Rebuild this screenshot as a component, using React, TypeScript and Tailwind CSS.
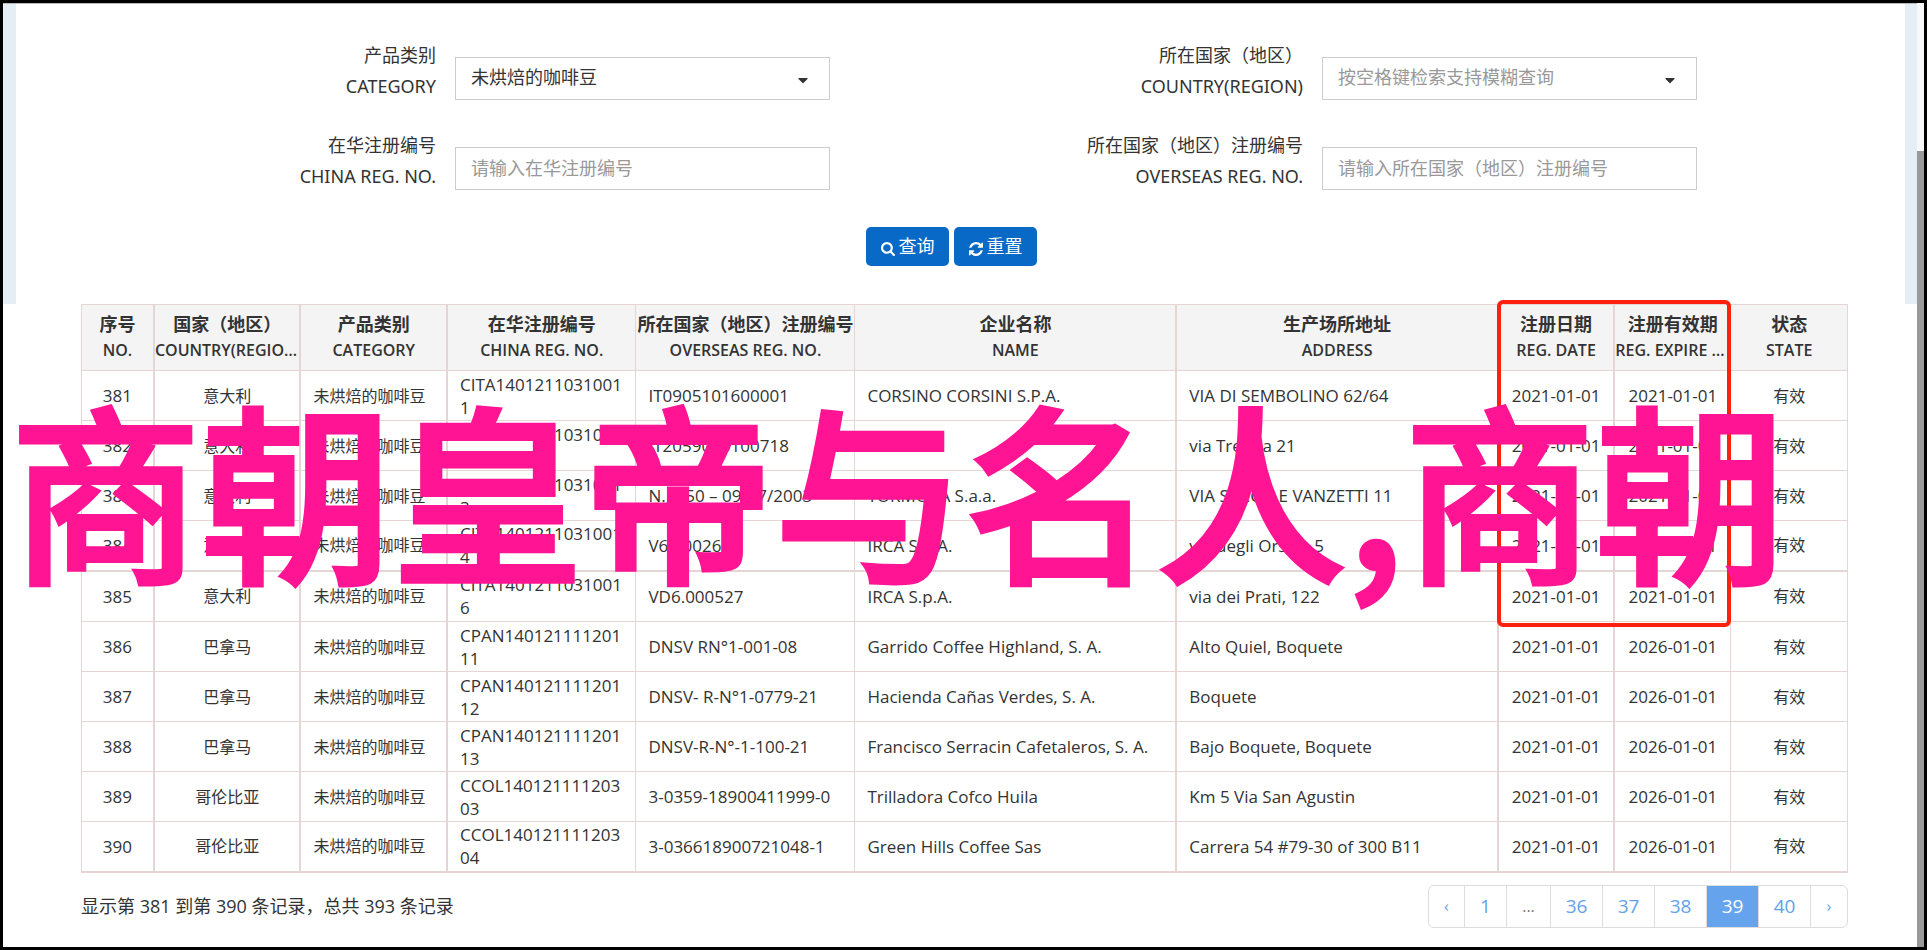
import { FaCaretDown } from 'react-icons/fa';

type Row = [string, string, string, string, string, string, string];

const rows: Row[] = [
  ['381', '意大利', 'CITA14012110310011', 'IT0905101600001', 'CORSINO CORSINI S.P.A.', 'VIA DI SEMBOLINO 62/64', '2021-01-01'],
  ['382', '意大利', 'CITA14012110310012', 'IT2059010100718', 'Kami Srl', 'via Trescia 21', '2021-01-01'],
  ['383', '意大利', 'CITA14012110310013', 'N.1750 – 09/07/2003', 'TORMOKA S.a.a.', 'VIA SACCO E VANZETTI 11', '2021-01-01'],
  ['384', '意大利', 'CITA14012110310014', 'V6.00026', 'IRCA S.p.A.', 'via degli Orsini, 5', '2021-01-01'],
  ['385', '意大利', 'CITA14012110310016', 'VD6.000527', 'IRCA S.p.A.', 'via dei Prati, 122', '2021-01-01'],
  ['386', '巴拿马', 'CPAN14012111120111', 'DNSV RN°1-001-08', 'Garrido Coffee Highland, S. A.', 'Alto Quiel, Boquete', '2026-01-01'],
  ['387', '巴拿马', 'CPAN14012111120112', 'DNSV- R-N°1-0779-21', 'Hacienda Cañas Verdes, S. A.', 'Boquete', '2026-01-01'],
  ['388', '巴拿马', 'CPAN14012111120113', 'DNSV-R-N°-1-100-21', 'Francisco Serracin Cafetaleros, S. A.', 'Bajo Boquete, Boquete', '2026-01-01'],
  ['389', '哥伦比亚', 'CCOL14012111120303', '3-0359-18900411999-0', 'Trilladora Cofco Huila', 'Km 5 Via San Agustin', '2026-01-01'],
  ['390', '哥伦比亚', 'CCOL14012111120304', '3-036618900721048-1', 'Green Hills Coffee Sas', 'Carrera 54 #79-30 of 300 B11', '2026-01-01'],
];

const columns = [
  { zh: '序号', en: 'NO.', style: 'w-[4.1%]' },
  { zh: '国家（地区）', en: 'COUNTRY(REGION)', style: 'w-[8.3%]' },
  { zh: '产品类别', en: 'CATEGORY', style: 'w-[8.3%]' },
  { zh: '在华注册编号', en: 'CHINA REG. NO.', style: 'w-[10.7%]' },
  { zh: '所在国家（地区）注册编号', en: 'OVERSEAS REG. NO.', style: 'w-[12.4%]' },
  { zh: '企业名称', en: 'NAME', style: 'w-[18.2%]' },
  { zh: '生产场所地址', en: 'ADDRESS', style: 'w-[18.2%]' },
  { zh: '注册日期', en: 'REG. DATE', style: 'w-[6.6%]' },
  { zh: '注册有效期', en: 'REG. EXPIRE DATE', style: 'w-[6.6%]' },
  { zh: '状态', en: 'STATE', style: 'w-[6.6%]' },
];

const pages = ['‹', '1', '...', '36', '37', '38', '39', '40', '›'];

function pageStyle(p: string) {
  if (p === '...') return 'w-11 text-[16px] text-[#777]';
  if (p === '1') return 'w-[42px]';
  if (p.length === 1) return 'w-9 text-[16px]';
  return p === '39' ? 'w-[52px] bg-[#65a4ec] text-white' : 'w-[52px]';
}

function SearchIcon() {
  return (
    <svg viewBox="0 0 1664 1664" className="mt-1 size-[14px]" fill="currentColor" aria-hidden="true">
      <path d="M1152 704q0-185-131.5-316.5t-316.5-131.5-316.5 131.5-131.5 316.5 131.5 316.5 316.5 131.5 316.5-131.5 131.5-316.5zm512 832q0 52-38 90t-90 38q-54 0-90-38l-343-342q-179 124-399 124-143 0-273.5-55.5t-225-150-150-225-55.5-273.5 55.5-273.5 150-225 225-150 273.5-55.5 273.5 55.5 225 150 150 225 55.5 273.5q0 220-124 399l343 343q37 37 37 90z" />
    </svg>
  );
}

function RefreshIcon() {
  return (
    <svg viewBox="0 0 1536 1536" className="mt-1 size-[14px]" fill="currentColor" aria-hidden="true">
      <path d="M1511 928q0 5-1 7-64 268-268 434.5t-478 166.5q-146 0-282.5-55t-243.5-157l-129 129q-19 19-45 19t-45-19-19-45v-448q0-26 19-45t45-19h448q26 0 45 19t19 45-19 45l-137 137q71 66 161 102t187 36q134 0 250-65t186-179q11-17 53-117 8-23 30-23h192q13 0 22.5 9.5t9.5 22.5zm25-800v448q0 26-19 45t-45 19h-448q-26 0-45-19t-19-45 19-45l138-138q-148-137-349-137-134 0-250 65t-186 179q-11 17-53 117-8 23-30 23h-199q-13 0-22.5-9.5t-9.5-22.5v-7q65-268 270-434.5t480-166.5q146 0 284 55.5t245 156.5l130-129q19-19 45-19t45 19 19 45z" />
    </svg>
  );
}

function FieldLabel({ id, zh, en }: { id: string; zh: string; en: string }) {
  return (
    <label
      htmlFor={id}
      className="w-[240px] pr-[19px] text-right font-['Noto_Sans','Noto_Sans_CJK_SC',sans-serif] text-[18px] leading-[31px] whitespace-nowrap"
    >
      {zh}
      <br />
      {en}
    </label>
  );
}

function SelectField({ id, zh, en, value, muted }: { id: string; zh: string; en: string; value: string; muted?: boolean }) {
  return (
    <div className="flex h-[90px] items-start">
      <FieldLabel id={id} zh={zh} en={en} />
      <div className="relative mt-[17px] flex-1">
        <select
          id={id}
          className={`h-[43px] w-full appearance-none border border-[#ccc] bg-white px-[15px] pb-0.5 text-[18px] ${muted ? 'text-[#999]' : 'text-[#333]'}`}
        >
          <option>{value}</option>
        </select>
        <FaCaretDown className="pointer-events-none absolute top-[15px] right-[19px] text-[16px] text-[#333]" />
      </div>
    </div>
  );
}

function TextField({ id, zh, en, placeholder }: { id: string; zh: string; en: string; placeholder: string }) {
  return (
    <div className="flex h-[90px] items-start">
      <FieldLabel id={id} zh={zh} en={en} />
      <input
        id={id}
        placeholder={placeholder}
        className="mt-[17px] h-[43px] flex-1 border border-[#ccc] bg-white px-[15px] pb-0.5 text-[18px] placeholder:text-[#999]"
      />
    </div>
  );
}

export default function App() {
  return (
    <div className="relative min-h-screen overflow-hidden border-[3px] border-black bg-white font-['Open_Sans','Noto_Sans_CJK_SC',sans-serif] text-[#333]">
      <div className="border-t border-[#bbb]">
        <section className="flex flex-col border-r-[19px] border-l-[13px] border-[#e6eef5] pt-9">
          <div className="grid grid-cols-[615px_615px] justify-between pr-[208px] pl-[199px]">
            <SelectField id="category" zh="产品类别" en="CATEGORY" value="未烘焙的咖啡豆" />
            <SelectField id="country" zh="所在国家（地区）" en="COUNTRY(REGION)" value="按空格键检索支持模糊查询" muted />
            <TextField id="china-reg" zh="在华注册编号" en="CHINA REG. NO." placeholder="请输入在华注册编号" />
            <TextField id="overseas-reg" zh="所在国家（地区）注册编号" en="OVERSEAS REG. NO." placeholder="请输入所在国家（地区）注册编号" />
          </div>
          <div className="flex justify-center gap-[5px] pt-[7px] pr-[18px] pb-[38px]">
            <button type="button" className="flex h-[39px] w-[83px] items-center justify-center gap-1 rounded-[5px] bg-[#0969c6] text-[18px] text-white">
              <SearchIcon />
              查询
            </button>
            <button type="button" className="flex h-[39px] w-[83px] items-center justify-center gap-1 rounded-[5px] bg-[#0969c6] text-[18px] text-white">
              <RefreshIcon />
              重置
            </button>
          </div>
        </section>
      </div>

      <main className="pr-[76px] pl-[78px]">
        <div className="relative">
          <table className="w-full table-fixed border-collapse border border-b-2 border-[#e6d5d5] [&_td]:border [&_td]:border-[#e6d5d5] [&_td:nth-child(2)]:border-l-2 [&_td:nth-child(3)]:border-l-2 [&_td:nth-child(4)]:border-l-2 [&_td:nth-child(7)]:border-l-2 [&_td:nth-child(8)]:border-l-2 [&_td:nth-child(9)]:border-l-2 [&_th]:border [&_th]:border-[#e6d5d5] [&_th:nth-child(2)]:border-l-2 [&_th:nth-child(3)]:border-l-2 [&_th:nth-child(4)]:border-l-2 [&_th:nth-child(7)]:border-l-2 [&_th:nth-child(8)]:border-l-2 [&_th:nth-child(9)]:border-l-2">
            <thead>
              <tr className="h-[66px] bg-[#f4f4f4]">
                {columns.map((c) => (
                  <th key={c.zh} className={`pb-0.5 text-center font-semibold ${c.style}`}>
                    <div className="truncate text-[18px] leading-[26px] font-bold">{c.zh}</div>
                    <div className="truncate text-[16px] leading-[26px]">{c.en}</div>
                  </th>
                ))}
              </tr>
            </thead>
            <tbody className="text-[17px]">
              {rows.map((r) => (
                <tr key={r[0]} className={r[0] === '385' ? 'h-[51px] border-t-2 border-[#e6d5d5]' : 'h-[50px]'}>
                  <td className="text-center">{r[0]}</td>
                  <td className="text-center text-[16px]">{r[1]}</td>
                  <td className="px-3 text-[16px] whitespace-nowrap">未烘焙的咖啡豆</td>
                  <td className="px-3 leading-[23px] break-all">{r[2]}</td>
                  <td className="px-3">{r[3]}</td>
                  <td className="px-3">{r[4]}</td>
                  <td className="px-3">{r[5]}</td>
                  <td className="text-center">2021-01-01</td>
                  <td className="text-center">{r[6]}</td>
                  <td className="text-center text-[16px]">有效</td>
                </tr>
              ))}
            </tbody>
          </table>
          <div className="pointer-events-none absolute -top-1 right-[117px] h-[327px] w-[234px] rounded-md border-4 border-[#ff2010]" />
        </div>

        <div className="flex items-start justify-between pt-3">
          <p className="pt-[7px] text-[18px] leading-7">显示第 381 到第 390 条记录，总共 393 条记录</p>
          <nav className="flex overflow-hidden rounded-md border border-[#ddd] text-[19px] text-[#62a2ea]">
            {pages.map((p) => (
              <a
                key={p}
                href="#"
                className={`flex h-[41px] items-center justify-center border-r border-[#ddd] last:border-r-0 ${pageStyle(p)}`}
              >
                {p}
              </a>
            ))}
          </nav>
        </div>
      </main>

      <div className="absolute top-0 right-0 h-full w-[7px] bg-[#f8f8f8] pt-[148px]">
        <div className="h-full bg-[#999]" />
      </div>

      <div className="pointer-events-none absolute top-[348px] left-[7px] font-['Noto_Sans_CJK_SC',sans-serif] text-[191px] leading-[270px] font-medium whitespace-nowrap text-[#ff1493] [-webkit-text-stroke:4px_#ff1493]">
        商朝皇帝与名人,商朝
      </div>
    </div>
  );
}
